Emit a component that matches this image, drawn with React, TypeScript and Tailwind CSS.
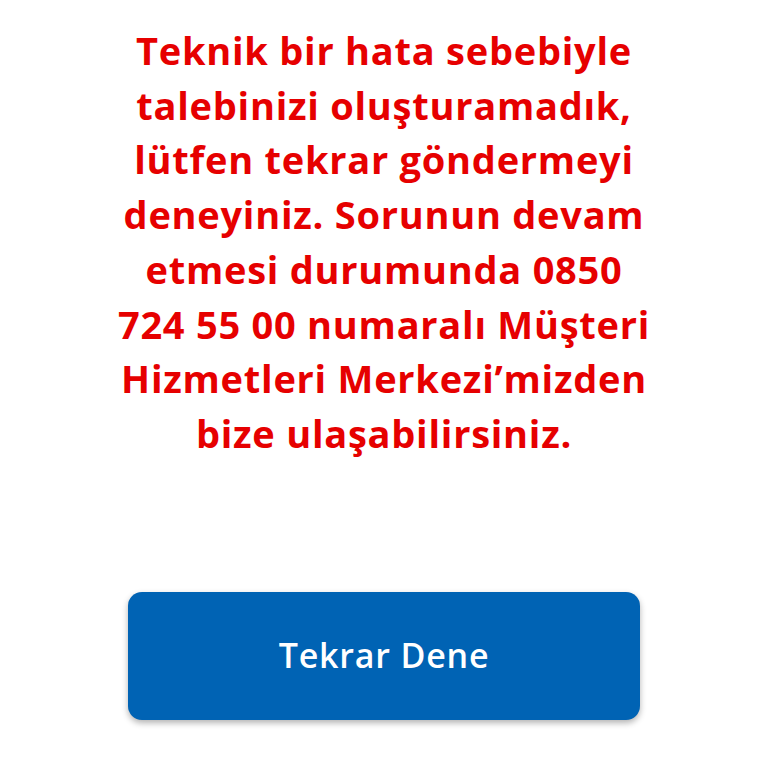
import React from 'react';

const lines = [
  'Teknik bir hata sebebiyle',
  'talebinizi oluşturamadık,',
  'lütfen tekrar göndermeyi',
  'deneyiniz. Sorunun devam',
  'etmesi durumunda 0850',
  '724 55 00 numaralı Müşteri',
  'Hizmetleri Merkezi’mizden',
  'bize ulaşabilirsiniz.',
];

const App: React.FC = () => {
  const handleRetry = () => {
    window.location.reload();
  };

  return (
    <div className="min-h-[768px] w-full bg-white flex flex-col items-center pt-[23px] font-['Open_Sans',sans-serif]">
      {/* Error message */}
      <p className="w-[600px] text-center text-[#e60000] font-bold text-[38px] leading-[54.7px] tracking-[0.75px]">
        {lines.map((line, i) => (
          <React.Fragment key={i}>
            {line}
            {i < lines.length - 1 && <br />}
          </React.Fragment>
        ))}
      </p>

      {/* Retry button */}
      <button
        onClick={handleRetry}
        className="mt-[131px] w-[512px] h-[128px] rounded-[14px] bg-[#0063b4] text-white text-[34px] font-semibold tracking-[0.8px] shadow-[0_3px_6px_rgba(0,0,0,0.3)]"
      >
        Tekrar Dene
      </button>
    </div>
  );
};

export default App;
